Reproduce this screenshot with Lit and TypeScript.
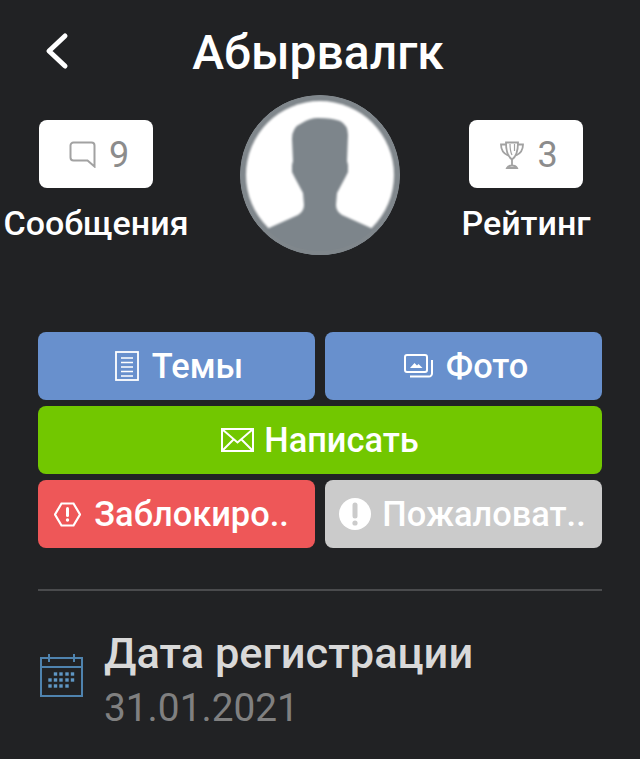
import { css, html, LitElement, svg } from "lit";
import { customElement } from "lit/decorators.js";

const icons = {
  chat: svg`<path d="M4.500 1.500h18a3 3 0 0 1 3 3v21l-7-6H4.500a3 3 0 0 1-3-3v-12a3 3 0 0 1 3-3z" fill="none" stroke="currentColor" stroke-width="2"/>`,
  trophy: svg`<g fill="none" stroke="currentColor" stroke-width="1.800"><path d="M6 1.500h12c0 9-1.500 14-6 17C7.500 15.500 6 10.500 6 1.500z"/><path d="M6 3.500H1c0 5 2.500 9 7 11M18 3.500h5c0 5-2.500 9-7 11"/><path d="M12 18.500v6M7 27c1-2 2.500-2.500 5-2.500s4 .5 5 2.500z"/><path d="M10 3c0 4.500.5 8 2 11M14.500 3v7" stroke-width="1.200"/></g>`,
  doc: svg`<g fill="none" stroke="currentColor"><rect x="1" y="1" width="22" height="28" stroke-width="1.800"/><path d="M6 7h12M6 11.500h12M6 16h12M6 20.500h12M6 25h12" stroke-width="1.500"/></g>`,
  pics: svg`<g fill="none" stroke="currentColor" stroke-width="2"><rect x="1" y="1" width="22" height="17" rx="2"/><path d="M28 6v13.500a3 3 0 0 1-3 3H6"/></g><path d="M6 14l4.500-5 2.500 2.500 1.500-1.500 4 4z" fill="currentColor"/>`,
  mail: svg`<g fill="none" stroke="currentColor" stroke-width="2"><rect x="1" y="1" width="31" height="22"/><path d="M1.500 1.500l15 13 15-13M1.500 22.500l11-11M31.500 22.500l-11-11"/></g>`,
  hexagon: svg`<path d="M7.500 1.500h12l6.500 11-6.500 11h-12L1 12.500z" fill="none" stroke="currentColor" stroke-width="2.200"/><path d="M13.500 6.500v7" stroke="currentColor" stroke-width="3" stroke-linecap="round"/><circle cx="13.500" cy="18" r="1.700" fill="currentColor"/>`,
  alert: svg`<circle cx="16" cy="16" r="16" fill="currentColor"/><path d="M16 7v11" stroke="#cbcbcb" stroke-width="5" stroke-linecap="round"/><circle cx="16" cy="25" r="2.600" fill="#cbcbcb"/>`,
};

const buttons = [
  { label: "Темы", icon: icons.doc, w: 24, h: 30, tone: "blue" },
  { label: "Фото", icon: icons.pics, w: 29, h: 24, tone: "blue" },
  { label: "Написать", icon: icons.mail, w: 33, h: 24, tone: "green wide" },
  { label: "Заблокиро..", icon: icons.hexagon, w: 27, h: 25, tone: "red" },
  { label: "Пожаловат..", icon: icons.alert, w: 32, h: 32, tone: "grey" },
];

@customElement("app-root")
export class AppRoot extends LitElement {
  static styles = css`
    :host {
      display: block;
      height: 759px;
      overflow: hidden;
      background: #212224;
      font-family: Roboto, "Noto Sans", sans-serif;
      color: #fff;
    }

    .header {
      position: relative;
      height: 95px;
      display: flex;
      justify-content: center;
    }

    .back {
      position: absolute;
      left: 44px;
      top: 32px;
      width: 26px;
      height: 38px;
    }

    .title {
      margin: 23px 4px 0 0;
      font-size: 48px;
      line-height: 60px;
      font-weight: 500;
    }

    .profile {
      display: grid;
      grid-template-columns: 192px 238px 192px;
      height: 237px;
    }

    .stat {
      display: flex;
      flex-direction: column;
      align-items: center;
      padding-top: 25px;
    }

    .badge {
      box-sizing: border-box;
      width: 114px;
      height: 68px;
      padding: 1px 0 0 6px;
      border-radius: 8px;
      background: #fff;
      color: #a2a2a2;
      display: flex;
      align-items: center;
      justify-content: center;
      gap: 13px;
      font-size: 36px;
    }

    .badge span {
      color: #8c8c8c;
    }

    .stat-label {
      margin-top: 17px;
      font-size: 34px;
      line-height: 36px;
      font-weight: 500;
      white-space: nowrap;
    }

    .avatar {
      display: block;
      width: 160px;
      height: 160px;
      margin: 0 30px 0 48px;
      border-radius: 50%;
    }

    .soft {
      filter: blur(0.8px);
    }

    .actions {
      display: grid;
      grid-template-columns: 277px 277px;
      column-gap: 10px;
      row-gap: 6px;
      margin: 0 38px;
    }

    .btn {
      box-sizing: border-box;
      height: 68px;
      border-radius: 8px;
      display: flex;
      align-items: center;
      justify-content: center;
      gap: 13px;
      font-size: 34.400px;
      font-weight: 500;
      white-space: nowrap;
    }

    .wide {
      grid-column: 1 / 3;
      gap: 10px;
    }

    .blue {
      background: #6890cd;
      padding-left: 5px;
    }

    .green {
      background: #72c700;
    }

    .red {
      background: #ee5758;
      padding-right: 10px;
    }

    .grey {
      background: #cbcbcb;
      gap: 11px;
      padding-right: 2px;
    }

    .divider {
      height: 2px;
      margin: 41px 38px 0;
      background: #4a4b4d;
    }

    .detail {
      display: flex;
      align-items: flex-start;
      gap: 20px;
      margin: 37px 0 0 40px;
    }

    .calendar {
      width: 44px;
      height: 44px;
      margin-top: 26px;
    }

    .detail-title {
      font-size: 43.400px;
      line-height: 52px;
      font-weight: 500;
      color: #d9d9d9;
    }

    .detail-value {
      font-size: 38.800px;
      line-height: 56px;
      color: #808080;
    }
  `;

  render() {
    return html`
      <div class="header">
        <svg class="back" viewBox="0 0 26 38">
          <path d="M21 4L5 19l16 15" fill="none" stroke="#fff" stroke-width="5" stroke-linecap="round" stroke-linejoin="round"></path>
        </svg>
        <h1 class="title">Абырвалгк</h1>
      </div>
      <div class="profile">
        <div class="stat">
          <div class="badge">
            <svg width="27" height="27" viewBox="0 0 27 27">${icons.chat}</svg>
            <span>9</span>
          </div>
          <div class="stat-label">Сообщения</div>
        </div>
        ${this.renderAvatar()}
        <div class="stat">
          <div class="badge">
            <svg width="24" height="28" viewBox="0 0 24 28">${icons.trophy}</svg>
            <span>3</span>
          </div>
          <div class="stat-label">Рейтинг</div>
        </div>
      </div>
      <div class="actions">
        ${buttons.map(
          (b) => html`
            <div class="btn ${b.tone}">
              <svg width=${b.w} height=${b.h} viewBox="0 0 ${b.w} ${b.h}">${b.icon}</svg>
              ${b.label}
            </div>
          `
        )}
      </div>
      <div class="divider"></div>
      <div class="detail">
        ${this.renderCalendar()}
        <div>
          <div class="detail-title">Дата регистрации</div>
          <div class="detail-value">31.01.2021</div>
        </div>
      </div>
    `;
  }

  renderAvatar() {
    return html`
      <svg class="avatar" viewBox="0 0 160 160">
        <circle cx="80" cy="80" r="80" fill="#80878c"></circle>
        <g class="soft">
          <circle cx="80" cy="80" r="74" fill="#fff"></circle>
          <path
            fill="#7d858b"
            d="M29 133 L58 120 Q64 116 64 110 L63 98 L55 83 L52 77 L52 70 L53 66 L52 44 Q52 32 62 28 Q70 23 78 23 Q92 23 100 26 Q108 30 108 40 L107 66 L108 70 L108 77 L105 83 L97 98 L96 110 Q96 116 102 120 L131 133 L150 170 L10 170 Z"
          ></path>
        </g>
        <circle cx="80" cy="80" r="78" fill="none" stroke="#80878c" stroke-width="4"></circle>
      </svg>
    `;
  }

  renderCalendar() {
    const cols = [10, 15.500, 21, 27, 32.500];
    const rows: [number, number[]][] = [
      [20, cols.slice(1)],
      [26, cols],
      [32, cols.slice(0, 4)],
    ];
    return html`
      <svg class="calendar" viewBox="0 0 44 44">
        <g fill="none" stroke="#4f83ae" stroke-width="2">
          <rect x="1" y="4" width="41" height="38"></rect>
          <path d="M1 13h41M9 0v8M34 0v8"></path>
        </g>
        <g fill="#5f96c4">
          ${rows.map(([y, xs]) => xs.map((x) => svg`<rect x=${x - 1.7} y=${y - 1.7} width="3.400" height="3.400"></rect>`))}
        </g>
      </svg>
    `;
  }
}
